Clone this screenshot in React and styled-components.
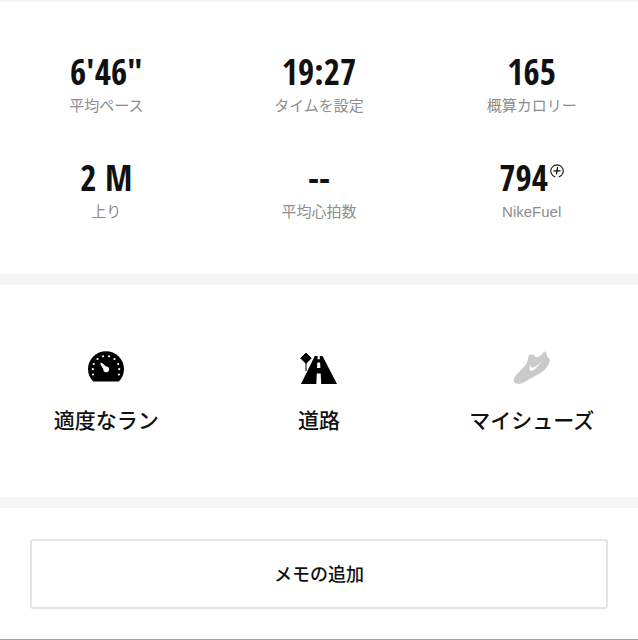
import styled, { createGlobalStyle } from "styled-components";

const GlobalStyle = createGlobalStyle`
  * {
    box-sizing: border-box;
  }

  body {
    margin: 0;
    background-color: #fff;
    color: #111;
    font-family: "Liberation Sans", "Noto Sans CJK JP", sans-serif;
  }
`;

const Page = styled.main`
  border-top: 2px solid #f5f5f5;
  border-bottom: 1px solid #a5a5a5;
`;

const Section = styled.section`
  padding: ${props => props.$padding};
  & + & {
    border-top: 11px solid #f5f5f5;
  }
`;

const Grid3 = styled.div`
  display: grid;
  grid-template-columns: repeat(3, 1fr);
  row-gap: 38px;
  text-align: center;
`;

const StatItem = styled.dl`
  display: flex;
  flex-direction: column-reverse;
  margin: 0;
`;

const StatLabel = styled.dt`
  color: #8d8d8d;
  font-size: 15px;
  line-height: 28px;
`;

const StatValue = styled.dd`
  display: flex;
  justify-content: center;
  margin: 0;
  font-family: "Noto Sans ExtraCondensed", "Open Sans Condensed",
    "Roboto Condensed", sans-serif;
  font-size: 35px;
  font-weight: bold;
  line-height: 40px;
`;

const FuelMark = styled.svg`
  width: 14px;
  height: 14px;
  margin: 6px 0 0 2px;
`;

const Activity = styled.div`
  display: flex;
  flex-direction: column;
  align-items: center;
  gap: 18px;
  & svg {
    width: 40px;
    height: 36px;
  }
  & h3 {
    margin: 0;
    font-family: "Noto Sans CJK JP", sans-serif;
    font-size: 21px;
    font-weight: 500;
    line-height: 32px;
  }
`;

const MemoButton = styled.button`
  display: block;
  width: 100%;
  height: 70px;
  padding: 0 0 2px;
  border: 2px solid #e5e5e5;
  border-radius: 3px;
  background-color: #fff;
  color: #111;
  font-family: "Noto Sans CJK JP", sans-serif;
  font-size: 18px;
  font-weight: 500;
`;

const FuelIcon = () => (
  <FuelMark viewBox="0 0 14 14" fill="none" stroke="#111" aria-hidden="true">
    <path d="M5.3 13A6.2 6.2 0 1 1 8.7 13" strokeWidth="1.1" />
    <path d="M7.6 3.2L6.4 10.4M3.4 6.8H10.6" strokeWidth="1.3" />
  </FuelMark>
);

const GaugeIcon = () => (
  <svg viewBox="0 0 40 36" aria-hidden="true">
    <path
      d="M7.2 32.5C4 29.3 2 25 2 20.2A18 18 0 0 1 38 20.2C38 25 36 29.3 32.8 32.5Z"
      fill="#000"
    />
    <g fill="#fff">
      <circle cx="7" cy="25.5" r="1.1" />
      <circle cx="6.8" cy="20.2" r="1.1" />
      <circle cx="7.8" cy="15" r="1.1" />
      <circle cx="11.5" cy="10" r="1.1" />
      <circle cx="17" cy="7.3" r="1.1" />
      <circle cx="23" cy="7.3" r="1.1" />
      <circle cx="28.5" cy="10" r="1.1" />
      <circle cx="32.2" cy="15" r="1.1" />
      <circle cx="33.2" cy="20.2" r="1.1" />
      <circle cx="33" cy="25.5" r="1.1" />
      <path d="M14.6 13.4L16.4 14.2L20 17.4A2.9 2.9 0 1 1 17.3 20L14.5 15.5Z" />
    </g>
  </svg>
);

const RoadIcon = () => (
  <svg viewBox="0 0 40 36" aria-hidden="true">
    <path d="M15.8 7H23.5L38 35H2Z" fill="#000" />
    <path d="M7 4L12.2 9.2L7 14.4L1.8 9.2Z" fill="#000" stroke="#000" strokeLinejoin="round" />
    <path d="M7 14V22" stroke="#000" />
    <path
      d="M18.7 7H20.7L20.9 10.3H18.5ZM18.3 13.5H21.1L21.4 19H18ZM17.8 24.5H21.7L22.2 35H17.3Z"
      fill="#fff"
    />
  </svg>
);

const ShoeIcon = () => (
  <svg viewBox="0 0 40 36" aria-hidden="true">
    <path
      d="M1.8 32.5C1.2 30.5 2 28.5 4 26.3L14 15.5C15.8 13 15.5 9.5 17 6L20.5 5.2L23.5 8C25 8.6 26.8 7.8 28.5 6.5L32.5 2.5L34 3L35.2 7.2L38 10.5C36.8 16 34 20.5 29.5 23.5L12 33.2C8 35.3 3.3 35.6 1.8 32.5Z"
      fill="#cacaca"
    />
    <path
      d="M18.8 15.4C16.8 18.6 17.2 22.6 20.5 21.5C23.8 20.2 26.6 16.2 30.4 11.2C27 14.9 23.2 18.4 21 18.7C19.1 18.9 18.5 17.6 18.8 15.4Z"
      fill="#fff"
    />
  </svg>
);

const stats = [
  { label: "平均ペース", value: "6'46\"" },
  { label: "タイムを設定", value: "19:27" },
  { label: "概算カロリー", value: "165" },
  { label: "上り", value: "2 M" },
  { label: "平均心拍数", value: "--" },
  { label: "NikeFuel", value: "794", icon: <FuelIcon /> }
];

const App = () => (
  <>
    <GlobalStyle />
    <Page>
      <Section $padding="50px 0 48px">
        <Grid3>
          {stats.map(({ label, value, icon }) => (
            <StatItem key={label}>
              <StatLabel>{label}</StatLabel>
              <StatValue>
                {value}
                {icon}
              </StatValue>
            </StatItem>
          ))}
        </Grid3>
      </Section>
      <Section $padding="64px 0 62px">
        <Grid3>
          <Activity>
            <GaugeIcon />
            <h3>適度なラン</h3>
          </Activity>
          <Activity>
            <RoadIcon />
            <h3>道路</h3>
          </Activity>
          <Activity>
            <ShoeIcon />
            <h3>マイシューズ</h3>
          </Activity>
        </Grid3>
      </Section>
      <Section $padding="31px 30px 30px">
        <MemoButton type="button">メモの追加</MemoButton>
      </Section>
    </Page>
  </>
);

export default App;
